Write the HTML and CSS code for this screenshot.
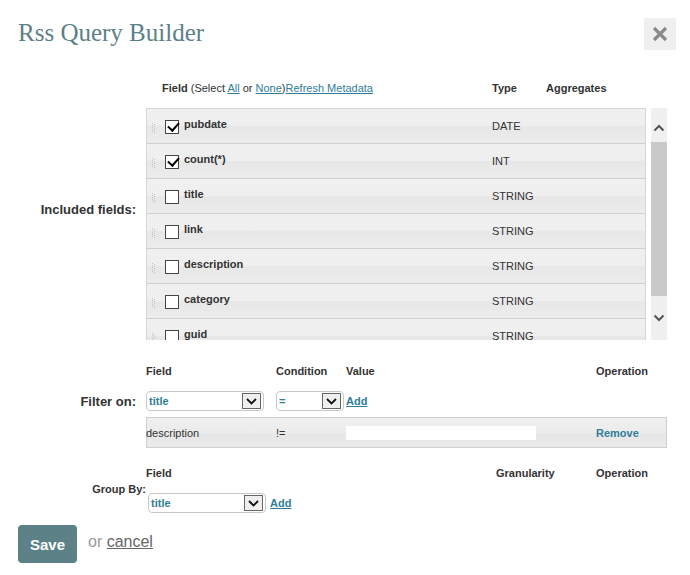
FILE: index.html
```html
<!DOCTYPE html>
<html>
<head>
<meta charset="utf-8">
<link rel="stylesheet" href="styles.css">
</head>
<body>
<div class="dialog">
  <header class="head">
    <h1 class="title">Rss Query Builder</h1>
    <button class="close" aria-label="close">
      <svg width="16" height="16" viewBox="0 0 16 16"><path d="M2 2 L14 14 M14 2 L2 14" stroke="#8a8a8a" stroke-width="3.2" stroke-linecap="butt"/></svg>
    </button>
  </header>

  <section class="form-row included">
    <div class="label big">Included fields:</div>
    <div class="content">
      <div class="cols-head">
        <span class="ch-field">Field <span class="norm">(Select <a href="#">All</a> or <a href="#">None</a>)</span><a href="#" class="norm">Refresh Metadata</a></span>
        <span class="ch-type">Type</span>
        <span class="ch-agg">Aggregates</span>
      </div>
      <div class="listwrap">
        <div class="list">
          <div class="frow"><span class="grip"></span><span class="cb on"></span><span class="fname">pubdate</span><span class="ftype">DATE</span></div>
          <div class="frow"><span class="grip"></span><span class="cb on"></span><span class="fname">count(*)</span><span class="ftype">INT</span></div>
          <div class="frow"><span class="grip"></span><span class="cb"></span><span class="fname">title</span><span class="ftype">STRING</span></div>
          <div class="frow"><span class="grip"></span><span class="cb"></span><span class="fname">link</span><span class="ftype">STRING</span></div>
          <div class="frow"><span class="grip"></span><span class="cb"></span><span class="fname">description</span><span class="ftype">STRING</span></div>
          <div class="frow"><span class="grip"></span><span class="cb"></span><span class="fname">category</span><span class="ftype">STRING</span></div>
          <div class="frow"><span class="grip"></span><span class="cb"></span><span class="fname">guid</span><span class="ftype">STRING</span></div>
        </div>
        <div class="scrollbar">
          <div class="sb-top"><svg width="12" height="8" viewBox="0 0 12 8"><path d="M1.5 6.5 L6 2 L10.5 6.5" fill="none" stroke="#555" stroke-width="2"/></svg></div>
          <div class="thumb"></div>
          <div class="sb-bot"><svg width="12" height="8" viewBox="0 0 12 8"><path d="M1.5 1.5 L6 6 L10.5 1.5" fill="none" stroke="#555" stroke-width="2"/></svg></div>
        </div>
      </div>
    </div>
  </section>

  <section class="form-row filter">
    <div class="label big">Filter on:</div>
    <div class="content">
      <div class="hdr filter-grid">
        <span>Field</span><span>Condition</span><span>Value</span><span class="op">Operation</span>
      </div>
      <div class="filter-grid add-line">
        <span class="sel w117">title<span class="dd"><svg width="11" height="7" viewBox="0 0 11 7"><path d="M1 1 L5.5 5.5 L10 1" fill="none" stroke="#111" stroke-width="1.8"/></svg></span></span>
        <span class="sel w67">=<span class="dd"><svg width="11" height="7" viewBox="0 0 11 7"><path d="M1 1 L5.5 5.5 L10 1" fill="none" stroke="#111" stroke-width="1.8"/></svg></span></span>
        <a href="#" class="add">Add</a>
      </div>
      <div class="filter-grid condrow">
        <span>description</span><span>!=</span><span class="valbox"></span><a href="#" class="remove">Remove</a>
      </div>
    </div>
  </section>

  <section class="group">
    <div class="hdr group-grid">
      <span></span><span>Field</span><span class="gran">Granularity</span><span>Operation</span>
    </div>
    <div class="group-line">
      <span class="glabel">Group By:</span>
      <div class="gsel">
        <span class="sel w118">title<span class="dd"><svg width="11" height="7" viewBox="0 0 11 7"><path d="M1 1 L5.5 5.5 L10 1" fill="none" stroke="#111" stroke-width="1.8"/></svg></span></span>
        <a href="#" class="add">Add</a>
      </div>
    </div>
  </section>

  <footer class="actions">
    <button class="save">Save</button>
    <span class="or">or <a href="#">cancel</a></span>
  </footer>
</div>
</body>
</html>
```

FILE: styles.css
```css
* { box-sizing: border-box; }
html, body { margin: 0; padding: 0; background: #fff; }
body { font-family: "Liberation Sans", Arial, sans-serif; font-size: 11px; color: #333; }

.dialog { width: 690px; height: 575px; padding: 18px 14px 0 18px; }

.head { display: flex; justify-content: space-between; align-items: flex-start; height: 63px; }
.title { margin: 0; font-family: "Liberation Serif", "Times New Roman", serif; font-weight: normal; font-size: 25px; color: #5b8088; line-height: 30px; }
.close { width: 32px; height: 32px; border: 0; background: #efefef; display: flex; align-items: center; justify-content: center; padding: 0; }

.form-row { display: grid; grid-template-columns: 118px 1fr; column-gap: 10px; }
.label { text-align: right; font-weight: bold; color: #333; }
.label.big { font-size: 13px; }
.included .label { align-self: center; padding-bottom: 3px; }

.cols-head { position: relative; height: 27px; font-weight: bold; font-size: 11px; color: #333; line-height: 14px; }
.cols-head > span { position: absolute; top: 0; }
.ch-field { left: 16px; }
.ch-type { left: 346px; }
.ch-agg { left: 400px; }
.norm { font-weight: normal; }
a { color: #2f7d98; }

.listwrap { display: flex; gap: 5px; height: 232px; }
.list { width: 500px; height: 232px; overflow: hidden; border: 1px solid #d6d6d6; border-bottom: 0; }
.frow { height: 35px; display: flex; align-items: center; border-bottom: 1px solid #cfcfcf; background: linear-gradient(#f0f0f0 0, #efefef 48%, #e7e7e7 52%, #ececec 100%); position: relative; }
.grip { width: 3px; height: 10px; margin-left: 5px; margin-top: 4px;
  background-image: repeating-linear-gradient(#c2c2c2 0 1px, transparent 1px 2px), repeating-linear-gradient(#c2c2c2 0 1px, transparent 1px 2px);
  background-size: 1px 100%; background-position: 0 0, 2px 1px; background-repeat: no-repeat; }
.cb { width: 14px; height: 14px; border: 1px solid #444; background: #fff; margin-left: 10px; margin-top: 2px; position: relative; }
.cb.on::after { content: ""; position: absolute; left: 1px; top: 0; width: 9px; height: 5px; border-left: 2.5px solid #000; border-bottom: 2.5px solid #000; transform: translate(1px, 1px) rotate(-48deg); }
.fname { font-weight: bold; margin-left: 5px; margin-bottom: 4px; }
.ftype { position: absolute; left: 345px; top: 11px; }

.scrollbar { width: 16px; height: 232px; background: #f0f0f0; display: flex; flex-direction: column; align-items: center; }
.sb-top { height: 34px; width: 16px; display: flex; justify-content: center; padding-top: 16px; }
.thumb { width: 16px; height: 154px; background: #c9c9c9; flex: none; }
.sb-bot { flex: 1; width: 16px; display: flex; justify-content: center; align-items: center; }

.filter { margin-top: 24px; }
.filter .label.big { align-self: start; padding-top: 30px; }
.filter-grid { display: grid; grid-template-columns: 130px 70px 250px 1fr; }
.hdr { font-weight: bold; line-height: 14px; }
.filter .hdr { height: 25px; }
.add-line { height: 24px; align-items: center; }
.sel { position: relative; display: flex; align-items: center; height: 20px; border: 1px solid #c8c8c8; border-radius: 4px; padding-left: 2px; color: #2f7d98; font-weight: bold; background: #fff; }
.w117 { width: 118px; }
.w67 { width: 68px; }
.w118 { width: 118px; }
.dd { position: absolute; right: 2px; top: 1px; width: 19px; height: 16px; border: 1px solid #666; background: #efefef; display: flex; align-items: center; justify-content: center; }
.add { font-weight: bold; font-size: 11px; }
.condrow { height: 31px; margin-top: 4px; align-items: center; border: 1px solid #cfcfcf; background: linear-gradient(#efefef 0, #ececec 50%, #e6e6e6 55%, #ebebeb 100%); width: 521px; grid-template-columns: 129px 70px 251px 1fr; }
.condrow > span:first-child { margin-left: -1px; }
.valbox { height: 14px; width: 190px; background: #fff; }
.remove { font-weight: bold; text-decoration: none; margin-left: -1px; }

.group { margin-top: 18px; }
.group-grid { display: grid; grid-template-columns: 128px 350px 100px 1fr; height: 16px; }
.group-line { display: flex; align-items: flex-start; }
.glabel { width: 130px; font-weight: bold; font-size: 11px; line-height: 14px; text-align: right; padding-right: 2px; }
.gsel { display: flex; align-items: center; gap: 4px; margin-top: 11px; height: 20px; }

.actions { display: flex; align-items: center; margin-top: 12px; gap: 11px; }
.save { width: 59px; height: 38px; background: #5c8288; color: #fff; border: 0; border-radius: 4px; font-family: "Liberation Sans", Arial, sans-serif; font-weight: bold; font-size: 15px; padding: 1px 0 0; }
.or { color: #999; font-size: 16px; margin-top: -4px; }
.or a { color: #666; }
```
